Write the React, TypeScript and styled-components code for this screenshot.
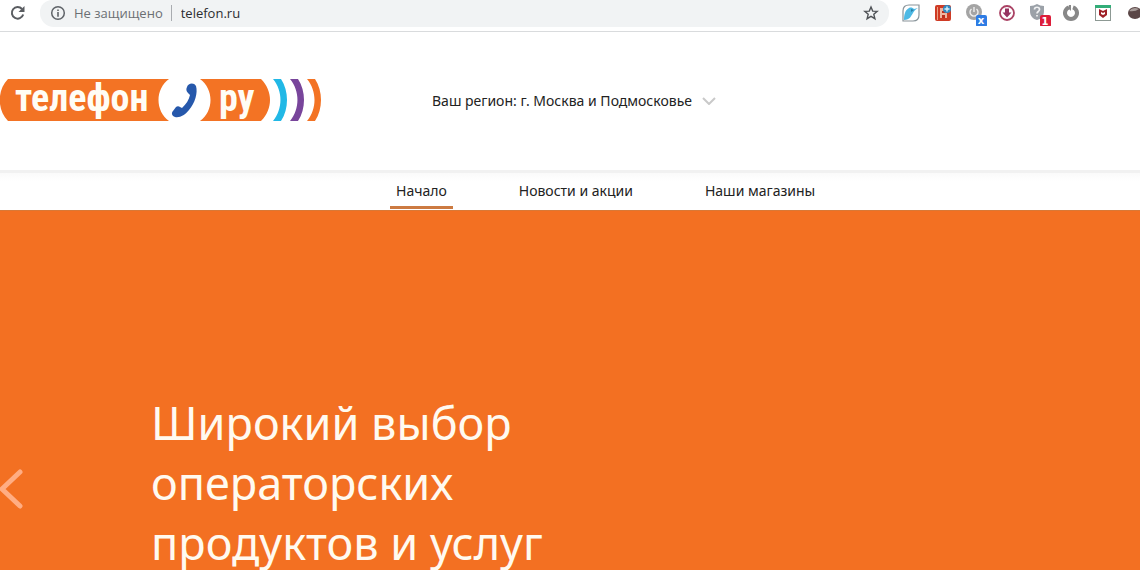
import React from 'react';
import styled, { createGlobalStyle } from 'styled-components';

const GlobalStyle = createGlobalStyle`
  * { box-sizing: border-box; }
  body { margin: 0; background: #fff; font-family: "Noto Sans", sans-serif; }
  button { border: 0; padding: 0; background: none; cursor: pointer; font: inherit; }
  svg { display: block; flex: none; }
`;

const Page = styled.div`
  display: flex;
  flex-direction: column;
  height: 100vh;
`;

const Toolbar = styled.div`
  display: flex;
  align-items: flex-start;
  height: 32px;
  flex: none;
  overflow: hidden;
  border-bottom: 1px solid #d9dbdd;
  font-family: "Open Sans", sans-serif;
  font-size: 13px;
`;

const ToolButton = styled.button<{ $width: number }>`
  display: flex;
  align-items: center;
  justify-content: center;
  flex: none;
  width: ${p => p.$width}px;
  height: 26px;
`;

const AddressBar = styled.div`
  display: flex;
  align-items: center;
  flex: 1;
  min-width: 0;
  height: 27px;
  margin: 0 6px 0 4px;
  padding: 0 0 1px 10px;
  border-radius: 12px 12px 14px 14px;
  background: #f1f3f4;
`;

const Security = styled.span`
  padding: 0 8px;
  color: #6b6f73;
  line-height: 18px;
  white-space: nowrap;
`;

const Separator = styled.span`
  width: 1px;
  height: 16px;
  background: #a9acb0;
`;

const Address = styled.input`
  flex: 1;
  min-width: 0;
  height: 18px;
  padding: 0 9px;
  border: 0;
  outline: 0;
  background: transparent;
  color: #2b2d30;
  font: inherit;
`;

const Extensions = styled.div`
  display: flex;
  flex: none;
  width: 245px;
  overflow: hidden;
`;

const Site = styled.div`
  flex: 1;
  min-height: 0;
  overflow: hidden auto;
  scrollbar-width: none;
`;

const Header = styled.header`
  display: flex;
  align-items: center;
  gap: 110px;
  height: 138px;
`;

const RegionButton = styled.button`
  display: flex;
  align-items: center;
  gap: 10px;
  color: #222;
  font-size: 14px;
  line-height: 20px;
  white-space: nowrap;
`;

const Nav = styled.nav`
  display: flex;
  gap: 60px;
  height: 40px;
  padding-left: 390px;
  border-top: 3px solid #f1f1f1;
  background: linear-gradient(#fafafa, #fff 8px);
`;

const NavLink = styled.a<{ $active?: boolean }>`
  height: 36px;
  padding: 8px 6px 0;
  border-bottom: 3px solid ${p => (p.$active ? '#cc7a41' : 'transparent')};
  color: #222;
  font-size: 14px;
  line-height: 20px;
  text-decoration: none;
  white-space: nowrap;
`;

const Hero = styled.section`
  display: flex;
  align-items: center;
  min-height: 556px;
  border-top: 1px solid #d97836;
  background: #f37022;
`;

const Previous = styled.button`
  flex: none;
  width: 151px;
`;

const Headline = styled.h1`
  max-width: 420px;
  margin: 0;
  padding-bottom: 12px;
  color: #fffaf0;
  font-size: 45px;
  font-weight: 400;
  line-height: 60px;
`;

const LogoText = styled.text`
  fill: #fffdf5;
  font: 700 38px "Roboto Condensed", Roboto, sans-serif;
`;

const BadgeText = styled.text`
  fill: #fff;
  font: 700 10px "DejaVu Sans", sans-serif;
  text-anchor: middle;
`;

const Logo = () => (
  <svg width="322" height="58" viewBox="0 -7 322 58" role="img" aria-label="телефон.ру">
    <path fill="#f37324" d="M8 0H169C155 10 155 32 169 42H8C-3 31-3 11 8 0Z" />
    <path fill="#f37324" d="M200 0H261C273 12 273 30 261 42H200C214 32 214 10 200 0Z" />
    <path fill="#21b8e6" d="M273 0H281C289 12 289 30 281 42H273C283 30 283 12 273 0Z" />
    <path fill="#78459b" d="M290 0H298C306 12 306 30 298 42H290C300 30 300 12 290 0Z" />
    <path fill="#f37324" d="M307 0H315C323 12 323 30 315 42H307C317 30 317 12 307 0Z" />
    <path
      fill="#2658ab"
      d="M187 8C188 4 194 3 196 7C198 14 195 24 189 31C185 36 180 39 175 38C172 37 171 34 173 32L176 28C177 27 179 27 180 28L182 29C186 25 189 21 190 16L188 14C186 12 186 10 187 8Z"
    />
    <LogoText x="15" y="32">телефон</LogoText>
    <LogoText x="219" y="32">ру</LogoText>
  </svg>
);

const ReloadIcon = () => (
  <svg width="16" height="16" viewBox="0 0 16 16">
    <path fill="none" stroke="#5a5d61" strokeWidth="2" d="M13.2 9.5A5.8 5.8 0 1 1 12 4" />
    <path fill="#5a5d61" d="M14.5 1V7H8.5Z" />
  </svg>
);

const InfoIcon = () => (
  <svg width="16" height="16" viewBox="0 0 16 16">
    <circle cx="8" cy="8" r="6.3" fill="none" stroke="#5f6368" strokeWidth="1.5" />
    <path fill="#5f6368" d="M7.2 4.4H8.8V6H7.2ZM7.2 7H8.8V11.7H7.2Z" />
  </svg>
);

const StarIcon = () => (
  <svg width="16" height="16" viewBox="0 0 16 16">
    <path fill="none" stroke="#4f5256" strokeWidth="1.4" d="M8 2L9.7 6.1L14.2 6.4L10.8 9.3L11.9 13.7L8 11.3L4.1 13.7L5.2 9.3L1.8 6.4L6.3 6.1Z" />
  </svg>
);

const BirdIcon = () => (
  <svg width="18" height="18" viewBox="0 0 18 18">
    <path fill="#fff" stroke="#89949a" strokeWidth="1.2" d="M7 1H17V11Q17 17 11 17H1V7Q1 1 7 1Z" />
    <path fill="#4db9e5" d="M2 16C2 11 3 6 7 4C9 3 11 4 12 5L16 4C13 6 12 7 11 9C9 12 8 16 2 16Z" />
    <path fill="#2c7fa6" d="M9 5L12 6L9 8Z" />
  </svg>
);

const RedBookIcon = () => (
  <svg width="18" height="18" viewBox="0 0 18 18">
    <rect x="1" y="1" width="16" height="16" rx="2" fill="#cf3b25" />
    <path fill="#f0b49f" d="M6 4H10V9H13V14H6Z" />
    <path fill="#bd2c1d" d="M8 7H11V9H8ZM8 11H11V14H8Z" />
    <path fill="#e9a184" d="M3 3H4V16H3Z" />
    <circle cx="13" cy="5" r="4" fill="#3187bf" />
    <path stroke="#d9f0fa" strokeWidth="1.4" d="M13 2.5V7.5M10.5 5H15.5" />
  </svg>
);

const PowerIcon = () => (
  <svg width="24" height="28" viewBox="0 0 24 28">
    <circle cx="11" cy="13" r="8" fill="#a4a4a4" />
    <path fill="none" stroke="#eee" strokeWidth="1.4" d="M8.5 10A4 4 0 1 0 13.5 10M11 8V13" />
    <rect x="13" y="16" width="11" height="12" rx="2" fill="#2e7ce4" />
    <BadgeText x="18" y="25">x</BadgeText>
  </svg>
);

const DownloadIcon = () => (
  <svg width="18" height="18" viewBox="0 0 18 18">
    <circle cx="9" cy="9" r="7" fill="#fff" stroke="#aa4264" strokeWidth="1.8" />
    <path fill="#963360" d="M7 4.5H11V8.5H13.5L9 13.5L4.5 8.5H7Z" />
  </svg>
);

const ShieldIcon = () => (
  <svg width="24" height="28" viewBox="0 0 24 28">
    <path fill="#9ba1a8" d="M3 7Q7 7 10 5Q13 7 17 7V12C17 17 14 20 10 21C6 20 3 17 3 12Z" />
    <path fill="none" stroke="#f1f2f3" strokeWidth="1.7" d="M7.5 10.5C7.5 7.5 12.5 7.5 12.5 10.5C12.5 12.5 10 12.5 10 14.5M10 16V17.5" />
    <rect x="13" y="16" width="11" height="12" rx="2" fill="#dc1d3a" />
    <BadgeText x="18" y="26">1</BadgeText>
  </svg>
);

const RingIcon = () => (
  <svg width="18" height="18" viewBox="0 0 18 18">
    <path fill="none" stroke="#888" strokeWidth="4" d="M11 3.3A6 6 0 1 1 7 3.3" />
    <path fill="#888" d="M7 1H9V7L7 5Z" />
  </svg>
);

const McAfeeIcon = () => (
  <svg width="18" height="18" viewBox="0 0 18 18">
    <rect x="1.5" y="1.5" width="15" height="15" fill="#fff" stroke="#8d9994" />
    <path fill="#32ad78" d="M1 1H17V4H1Z" />
    <path fill="#9f2027" d="M5 5L9 7L13 5V11L9 14L5 11ZM7 8V10L9 11L11 10V8L9 9Z" fillRule="evenodd" />
  </svg>
);

const BallIcon = () => (
  <svg width="18" height="18" viewBox="0 0 18 18">
    <ellipse cx="9" cy="9" rx="7" ry="6" fill="#5a4646" />
    <path fill="#a69b98" d="M3 7Q7 2 13 5Q9 8 3 7Z" />
  </svg>
);

const extensions = [
  { name: 'Птица', icon: <BirdIcon /> },
  { name: 'Словарь', icon: <RedBookIcon /> },
  { name: 'Питание', icon: <PowerIcon /> },
  { name: 'Загрузки', icon: <DownloadIcon /> },
  { name: 'Защита', icon: <ShieldIcon /> },
  { name: 'Кольцо', icon: <RingIcon /> },
  { name: 'Антивирус', icon: <McAfeeIcon /> },
  { name: 'Профиль', icon: <BallIcon /> },
];

const links = ['Начало', 'Новости и акции', 'Наши магазины'];

export default function App() {
  return (
    <Page>
      <GlobalStyle />
      <Toolbar>
        <ToolButton $width={36} aria-label="Обновить"><ReloadIcon /></ToolButton>
        <AddressBar>
          <InfoIcon />
          <Security>Не защищено</Security>
          <Separator />
          <Address aria-label="Адрес" defaultValue="telefon.ru" />
          <ToolButton $width={36} aria-label="В закладки"><StarIcon /></ToolButton>
        </AddressBar>
        <Extensions>
          {extensions.map(e => (
            <ToolButton key={e.name} $width={32} aria-label={e.name}>{e.icon}</ToolButton>
          ))}
        </Extensions>
      </Toolbar>
      <Site>
        <Header>
          <a href="#home"><Logo /></a>
          <RegionButton>
            Ваш регион: г. Москва и Подмосковье
            <svg width="14" height="8" viewBox="0 0 14 8">
              <path fill="none" stroke="#c9c9c9" strokeWidth="2" d="M1 1L7 7L13 1" />
            </svg>
          </RegionButton>
        </Header>
        <Nav>
          {links.map((text, i) => (
            <NavLink key={text} href={`#page-${i}`} $active={i === 0}>{text}</NavLink>
          ))}
        </Nav>
        <Hero>
          <Previous aria-label="Назад">
            <svg width="24" height="40" viewBox="0 0 24 40">
              <path fill="none" stroke="#ffad83" strokeWidth="5" strokeLinecap="round" d="M20 3L2 20L20 37" />
            </svg>
          </Previous>
          <Headline>Широкий выбор операторских продуктов и услуг</Headline>
        </Hero>
      </Site>
    </Page>
  );
}
